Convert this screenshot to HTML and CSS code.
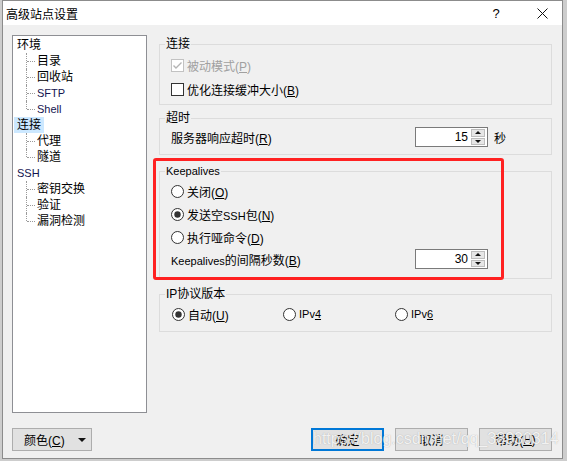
FILE: index.html
```html
<!DOCTYPE html>
<html lang="zh-CN">
<head>
<meta charset="utf-8">
<title>高级站点设置</title>
<link rel="stylesheet" href="styles.css">
</head>
<body>
<div class="window">
  <div class="titlebar">
    <span class="title">高级站点设置</span>
    <span class="help">?</span>
    <span class="close"><svg width="11" height="11" viewBox="0 0 11 11"><path d="M0.5 0.5L10.5 10.5M10.5 0.5L0.5 10.5" stroke="#111" stroke-width="1"/></svg></span>
  </div>
  <div class="content">
    <ul class="tree">
      <li class="node"><span>环境</span></li>
      <li class="child">目录</li>
      <li class="child">回收站</li>
      <li class="child"><span class="lat">SFTP</span></li>
      <li class="child last"><span class="lat">Shell</span></li>
      <li class="node sel"><span>连接</span></li>
      <li class="child">代理</li>
      <li class="child last">隧道</li>
      <li class="node"><span class="lat">SSH</span></li>
      <li class="child">密钥交换</li>
      <li class="child">验证</li>
      <li class="child last">漏洞检测</li>
    </ul>
    <div class="pane">
      <fieldset class="group g-conn">
        <legend>连接</legend>
        <div class="row">
          <svg class="box" width="13" height="13" viewBox="0 0 13 13"><rect x="0.5" y="0.5" width="12" height="12" fill="#fff" stroke="#c2c2c2"/><path d="M2.5 6.5L5 9L10.5 3.5" fill="none" stroke="#b4b4b4" stroke-width="1.4"/></svg>
          <span class="dim">被动模式(<u>P</u>)</span>
        </div>
        <div class="row">
          <svg class="box" width="13" height="13" viewBox="0 0 13 13"><rect x="0.5" y="0.5" width="12" height="12" fill="#fff" stroke="#333"/></svg>
          <span>优化连接缓冲大小(<u>B</u>)</span>
        </div>
      </fieldset>

      <fieldset class="group g-timeout">
        <legend>超时</legend>
        <div class="row spinrow">
          <span>服务器响应超时(<u>R</u>)</span>
          <div class="spin"><span class="val">15</span><span class="btns"><span class="b up"></span><span class="b dn"></span></span></div>
          <span class="unit">秒</span>
        </div>
      </fieldset>

      <fieldset class="group g-keep">
        <legend><span class="lat">Keepalives</span></legend>
        <div class="row radiorow">
          <svg class="box" width="13" height="13" viewBox="0 0 13 13"><circle cx="6.5" cy="6.5" r="6" fill="#fff" stroke="#333"/></svg>
          <span>关闭(<u>O</u>)</span>
        </div>
        <div class="row radiorow">
          <svg class="box" width="13" height="13" viewBox="0 0 13 13"><circle cx="6.5" cy="6.5" r="6" fill="#fff" stroke="#333"/><circle cx="6.5" cy="6.5" r="3.2" fill="#333"/></svg>
          <span>发送空<span class="lat">SSH</span>包(<u>N</u>)</span>
        </div>
        <div class="row radiorow">
          <svg class="box" width="13" height="13" viewBox="0 0 13 13"><circle cx="6.5" cy="6.5" r="6" fill="#fff" stroke="#333"/></svg>
          <span>执行哑命令(<u>D</u>)</span>
        </div>
        <div class="row spinrow">
          <span><span class="lat">Keepalives</span>的间隔秒数(<u>B</u>)</span>
          <div class="spin"><span class="val">30</span><span class="btns"><span class="b up"></span><span class="b dn"></span></span></div>
          <span class="unit"></span>
        </div>
      </fieldset>

      <fieldset class="group g-ip">
        <legend>IP协议版本</legend>
        <div class="row iprow">
          <span class="opt">
            <svg class="box" width="13" height="13" viewBox="0 0 13 13"><circle cx="6.5" cy="6.5" r="6" fill="#fff" stroke="#333"/><circle cx="6.5" cy="6.5" r="3.2" fill="#333"/></svg>
            <span>自动(<u>U</u>)</span>
          </span>
          <span class="opt">
            <svg class="box" width="13" height="13" viewBox="0 0 13 13"><circle cx="6.5" cy="6.5" r="6" fill="#fff" stroke="#333"/></svg>
            <span class="lat">IPv<u>4</u></span>
          </span>
          <span class="opt">
            <svg class="box" width="13" height="13" viewBox="0 0 13 13"><circle cx="6.5" cy="6.5" r="6" fill="#fff" stroke="#333"/></svg>
            <span class="lat">IPv<u>6</u></span>
          </span>
        </div>
      </fieldset>

      <div class="highlight"></div>
    </div>
  </div>
  <div class="buttons">
    <div class="btn color"><span>颜色(<u>C</u>)</span><span class="caret"></span></div>
    <div class="spacer"></div>
    <div class="btn ok">确定</div>
    <div class="btn">取消</div>
    <div class="btn">帮助(<u>H</u>)</div>
  </div>
  <span class="watermark">https://blog.csdn.net/qq_38930314</span>
</div>
</body>
</html>
```
FILE: styles.css
```css
* { box-sizing: border-box; }
html, body { margin: 0; padding: 0; }
body {
  width: 567px;
  height: 461px;
  overflow: hidden;
  background: #cdcdcd;
  font-family: "Liberation Sans", "Noto Sans CJK SC", sans-serif;
  font-size: 12px;
  color: #000;
}
u { text-decoration: underline; text-underline-offset: 1px; }
.lat { font-size: 11px; }

.window {
  margin-left: 2px;
  width: 561px;
  height: 459px;
  border: 1px solid #8c8c8c;
  background: #f0f0f0;
  display: flex;
  flex-direction: column;
  position: relative;
}
.titlebar {
  height: 24px;
  background: #fff;
  display: flex;
  align-items: center;
  padding-left: 3px;
}
.title { flex: 1; font-size: 12px; }
.help { width: 14px; text-align: center; font-size: 13px; margin-right: 34px; }
.close { width: 11px; height: 11px; margin-right: 14px; display: flex; }

.content {
  display: flex;
  padding: 10px 10px 0 9px;
}
.tree {
  list-style: none;
  margin: 0;
  padding: 1px 0;
  width: 135px;
  height: 378px;
  border: 1px solid #8e8f94;
  background: #fff;
}
.tree li {
  height: 16px;
  line-height: 16px;
  position: relative;
  white-space: nowrap;
}
.tree .node { padding-left: 1px; }
.tree .node > span { display: inline-block; height: 16px; padding: 0 3px; }
.tree .node > span.lat { color: #141450; }
.tree .node.sel > span { background: #cce8ff; }
.tree .child { padding-left: 24px; }
.tree .child .lat { color: #141450; }
.tree .child::before {
  content: "";
  position: absolute;
  left: 13px;
  top: 0;
  bottom: 0;
  border-left: 1px dotted #9a9a9a;
}
.tree .child.last::before { bottom: 8px; }
.tree .child::after {
  content: "";
  position: absolute;
  left: 14px;
  top: 8px;
  width: 8px;
  border-top: 1px dotted #9a9a9a;
}

.pane {
  flex: 1;
  margin-left: 12px;
  padding-top: 1px;
  position: relative;
}
.group {
  margin: 0;
  min-width: 0;
  border: 1px solid #dcdcdc;
  padding: 1px 0 3px;
}
.group legend {
  margin-left: 5px;
  padding: 0 1px;
  height: 16px;
  line-height: 16px;
}
.row {
  display: flex;
  align-items: center;
  padding-left: 11px;
  height: 24px;
}
.box { flex: none; margin-right: 3px; }
.dim { color: #a0a0a0; }

.g-timeout { margin-top: 5px; padding: 1px 0 7px; }
.g-keep { margin-top: 8px; padding: 0 0 9px; }
.g-ip { margin-top: 7px; padding: 1px 0 6px; }

.spinrow {
  height: 20px;
  display: grid;
  grid-template-columns: 1fr 73px 63px;
  align-items: center;
}
.radiorow { height: 23px; }
.g-keep .radiorow:first-of-type { margin-top: 1px; }
.iprow {
  height: 22px;
  display: grid;
  grid-template-columns: 111px 112px auto;
  padding-left: 12px;
}
.opt { display: flex; align-items: center; }

.spin {
  width: 73px;
  height: 20px;
  border: 1px solid #7a7a7a;
  background: #fff;
  display: flex;
}
.val { flex: 1; text-align: right; padding-right: 3px; line-height: 18px; }
.btns {
  width: 14px;
  margin: 1px 2px 1px 0;
  display: flex;
  flex-direction: column;
  gap: 1px;
}
.b {
  flex: 1;
  background: #e6e6e6;
  border: 1px solid #bdbdbd;
  display: flex;
  align-items: center;
  justify-content: center;
}
.up::before {
  content: "";
  border-left: 3px solid transparent;
  border-right: 3px solid transparent;
  border-bottom: 3px solid #111;
}
.dn::before {
  content: "";
  border-left: 3px solid transparent;
  border-right: 3px solid transparent;
  border-top: 3px solid #111;
}
.unit { padding-left: 6px; }

.highlight {
  position: absolute;
  left: -6px;
  top: 123px;
  width: 351px;
  height: 122px;
  border: 3px solid #ff2121;
  border-radius: 3px;
}

.buttons {
  display: flex;
  align-items: center;
  margin-top: 15px;
  padding: 0 10px 0 9px;
}
.btn {
  height: 23px;
  width: 73px;
  border: 1px solid #adadad;
  background: #e1e1e1;
  display: flex;
  align-items: center;
  justify-content: center;
}
.btn + .btn { margin-left: 11px; }
.spacer + .btn { margin-left: 0; }
.ok { border: 2px solid #0078d7; }
.color {
  width: 80px;
  justify-content: space-between;
  padding: 0 5px 0 11px;
}
.caret {
  border-left: 4px solid transparent;
  border-right: 4px solid transparent;
  border-top: 4px solid #111;
}
.spacer { flex: 1; }

.watermark {
  position: absolute;
  left: 310px;
  top: 428px;
  font-family: "Liberation Sans", sans-serif;
  font-size: 16px;
  line-height: 20px;
  color: rgba(255, 255, 255, 0.85);
  text-shadow: 0 0 1px rgba(110, 110, 110, 0.55);
  pointer-events: none;
  white-space: nowrap;
}
```
